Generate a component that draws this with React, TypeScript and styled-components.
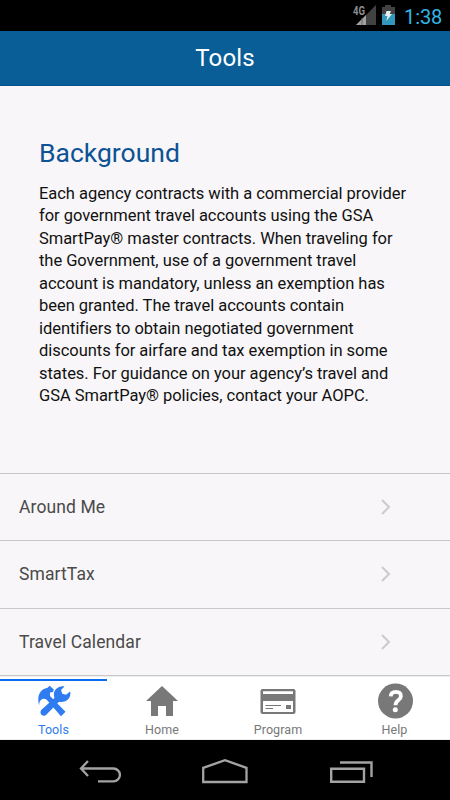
import React from "react";
import styled, { createGlobalStyle } from "styled-components";

const GlobalStyle = createGlobalStyle`
  * { box-sizing: border-box; }
  body { margin: 0; background: #000; font-family: Roboto, sans-serif; overflow: hidden; }
  svg { display: block; flex: none; }
`;

const Screen = styled.div`
  width: 450px;
  height: 800px;
  display: flex;
  flex-direction: column;
  background: #000;
  overflow: hidden;
`;

const StatusBar = styled.div`
  height: 31px;
  flex: none;
  display: flex;
  align-items: flex-start;
  justify-content: flex-end;
  padding-right: 8px;
  background: #000;
`;

const Clock = styled.span`
  margin: 5px 0 0 7px;
  width: 38px;
  font-size: 20px;
  line-height: 24px;
  letter-spacing: -0.1px;
  white-space: nowrap;
  color: #33b5e5;
`;

const Header = styled.header`
  height: 55px;
  flex: none;
  padding-top: 12px;
  text-align: center;
  font-size: 24px;
  line-height: 30px;
  letter-spacing: 0.1px;
  color: #fff;
  background: #0a5e98;
  border-bottom: 1px solid #07508a;
`;

const Content = styled.main`
  height: 590px;
  flex: none;
  background: #f8f6f8;
  overflow: hidden;
`;

const Intro = styled.section`
  height: 386.5px;
  padding: 49px 0 0 39px;
`;

const Heading = styled.h1`
  margin: 0;
  font-size: 26.5px;
  font-weight: 400;
  line-height: 36px;
  color: #0c5294;
`;

const Copy = styled.p`
  margin: 11.5px 0 0;
  font-size: 16.5px;
  line-height: 22.5px;
  letter-spacing: -0.04px;
  color: #111;
  white-space: nowrap;
`;

const Line = styled.span`
  display: block;
`;

const List = styled.div`
  height: 203.5px;
  border-bottom: 1px solid #c8c7c9;
`;

const Row = styled.div`
  height: 67.5px;
  display: flex;
  align-items: center;
  justify-content: space-between;
  padding: 0 59px 0 19px;
  border-top: 1px solid #c8c7c9;
  font-size: 17.5px;
  letter-spacing: 0.1px;
  color: #4a4a4a;
`;

const TabBar = styled.nav`
  height: 64px;
  flex: none;
  display: grid;
  grid-template-columns: 107px 110px 122px 111px;
  background: #fff;
  border-bottom: 1px solid #eee;
  box-shadow: inset 0 1px 0 #efeeef;
`;

const Tab = styled.div<{ $active?: boolean }>`
  display: flex;
  flex-direction: column;
  align-items: center;
  margin-top: 3px;
  border-top: 2px solid ${(p) => (p.$active ? "#0a6df0" : "transparent")};
  color: ${(p) => (p.$active ? "#2e7cf0" : "#787878")};
`;

const TabLabel = styled.span`
  margin-top: 1px;
  font-size: 12.5px;
  line-height: 16px;
  letter-spacing: 0.1px;
`;

const NavBar = styled.div`
  height: 60px;
  flex: none;
  display: flex;
  align-items: center;
  padding: 4px 0 0 79px;
  gap: 81px;
  background: #000;
`;

const SignalIcon = () => (
  <svg width="25" height="28" viewBox="0 0 25 28">
    <path d="M24 5V25H4Z" fill="#424242" />
    <path d="M14 15V25H4Z" fill="#a0a0a0" />
    <path d="M10 18V25" stroke="#666" />
    <text x="1" y="14.5" fontSize="12" fontWeight="700" fontFamily="Roboto, sans-serif" textLength="12" lengthAdjust="spacingAndGlyphs" fill="#8d8d8d">4G</text>
  </svg>
);

const BatteryIcon = () => (
  <svg width="20" height="28" viewBox="0 0 20 28">
    <path d="M5 7H8V5H14V7H18V14H5Z" fill="#424242" />
    <path d="M5 14H18V25H5Z" fill="#3197bd" />
    <path d="M9.5 11H14L12.7 14H15L9.3 21L10.5 16H8Z" fill="#e8eef0" />
  </svg>
);

const Chevron = () => (
  <svg width="10" height="16" viewBox="0 0 10 16">
    <path d="M1 1L8 8L1 15" fill="none" stroke="#ccc" strokeWidth="2" />
  </svg>
);

const ToolsIcon = () => (
  <svg width="34" height="40" viewBox="0 0 34 40">
    <g fill="currentColor">
      <path d="M2.2 24.5C-.2 17 1.8 8.5 10.5 6.8L12.7 4.8L16.8 8.5L16 11L13 11.5L13 15L28.5 30.8L24 35.2L9.5 18.5C5.5 16.5 2 19 2.2 24.5Z" />
      <path d="M27.5 5.4C20.5 4.2 15 10 17.5 17L4.2 29C1.7 32.5 6.3 37 9.5 33.5L22 20.8C28.5 22 34.6 17.5 33.2 10.5L29 13.8L25.3 12.8L24 9Z" />
    </g>
  </svg>
);

const HomeIcon = () => (
  <svg width="34" height="40" viewBox="0 0 34 40">
    <path d="M17 5L33 20H28V35H21V25H13V35H6V20H1Z" fill="currentColor" />
  </svg>
);

const CardIcon = () => (
  <svg width="36" height="40" viewBox="0 0 36 40">
    <rect x="0.5" y="8" width="35" height="25" rx="2" fill="currentColor" />
    <path d="M3 10.2H33V13H3ZM3 20H33V31H3Z" fill="#fff" />
    <path d="M5.5 24.5H21M5.5 27.5H13" stroke="currentColor" />
    <rect x="26" y="24" width="5" height="4" fill="currentColor" />
  </svg>
);

const HelpIcon = () => (
  <svg width="38" height="40" viewBox="-1 0 38 40">
    <circle cx="18.5" cy="20" r="17.5" fill="currentColor" />
    <path d="M13.7 15.4C14 11.8 16.5 10.9 18.8 10.9C22 10.9 23.9 12.5 23.9 15.2C23.9 19.5 18.5 18.5 18.5 24.3" fill="none" stroke="#fff" strokeWidth="3.8" />
    <circle cx="18.3" cy="28.8" r="2.5" fill="#fff" />
  </svg>
);

const BackIcon = () => (
  <svg width="42" height="24" viewBox="0 0 42 24">
    <path d="M9 1L2 8.5L9 16M2 8.5H34.5A6.3 6.3 0 0 1 34.5 21.3H19" fill="none" stroke="#a3a3a3" strokeWidth="2.3" />
  </svg>
);

const HomeKeyIcon = () => (
  <svg width="46" height="26" viewBox="0 0 46 26">
    <path d="M1.2 23V8.8L23 1.2L44.5 8.8V23Z" fill="none" stroke="#a3a3a3" strokeWidth="2.3" />
  </svg>
);

const RecentsIcon = () => (
  <svg width="44" height="24" viewBox="0 0 44 24">
    <path d="M2.2 8.8H35V21.8H2.2ZM11 2.5H42.5V17" fill="none" stroke="#a3a3a3" strokeWidth="2.4" />
  </svg>
);

const copyLines = [
  "Each agency contracts with a commercial provider",
  "for government travel accounts using the GSA",
  "SmartPay® master contracts. When traveling for",
  "the Government, use of a government travel",
  "account is mandatory, unless an exemption has",
  "been granted. The travel accounts contain",
  "identifiers to obtain negotiated government",
  "discounts for airfare and tax exemption in some",
  "states. For guidance on your agency’s travel and",
  "GSA SmartPay® policies, contact your AOPC.",
];

const tabs = [
  { label: "Tools", Icon: ToolsIcon },
  { label: "Home", Icon: HomeIcon },
  { label: "Program", Icon: CardIcon },
  { label: "Help", Icon: HelpIcon },
];

export default function App() {
  return (
    <Screen>
      <GlobalStyle />
      <StatusBar>
        <SignalIcon />
        <BatteryIcon />
        <Clock>1:38</Clock>
      </StatusBar>
      <Header>Tools</Header>
      <Content>
        <Intro>
          <Heading>Background</Heading>
          <Copy>
            {copyLines.map((line) => (
              <Line key={line}>{line}</Line>
            ))}
          </Copy>
        </Intro>
        <List>
          {["Around Me", "SmartTax", "Travel Calendar"].map((name) => (
            <Row key={name}>
              {name}
              <Chevron />
            </Row>
          ))}
        </List>
      </Content>
      <TabBar>
        {tabs.map(({ label, Icon }, i) => (
          <Tab key={label} $active={i === 0}>
            <Icon />
            <TabLabel>{label}</TabLabel>
          </Tab>
        ))}
      </TabBar>
      <NavBar>
        <BackIcon />
        <HomeKeyIcon />
        <RecentsIcon />
      </NavBar>
    </Screen>
  );
}
